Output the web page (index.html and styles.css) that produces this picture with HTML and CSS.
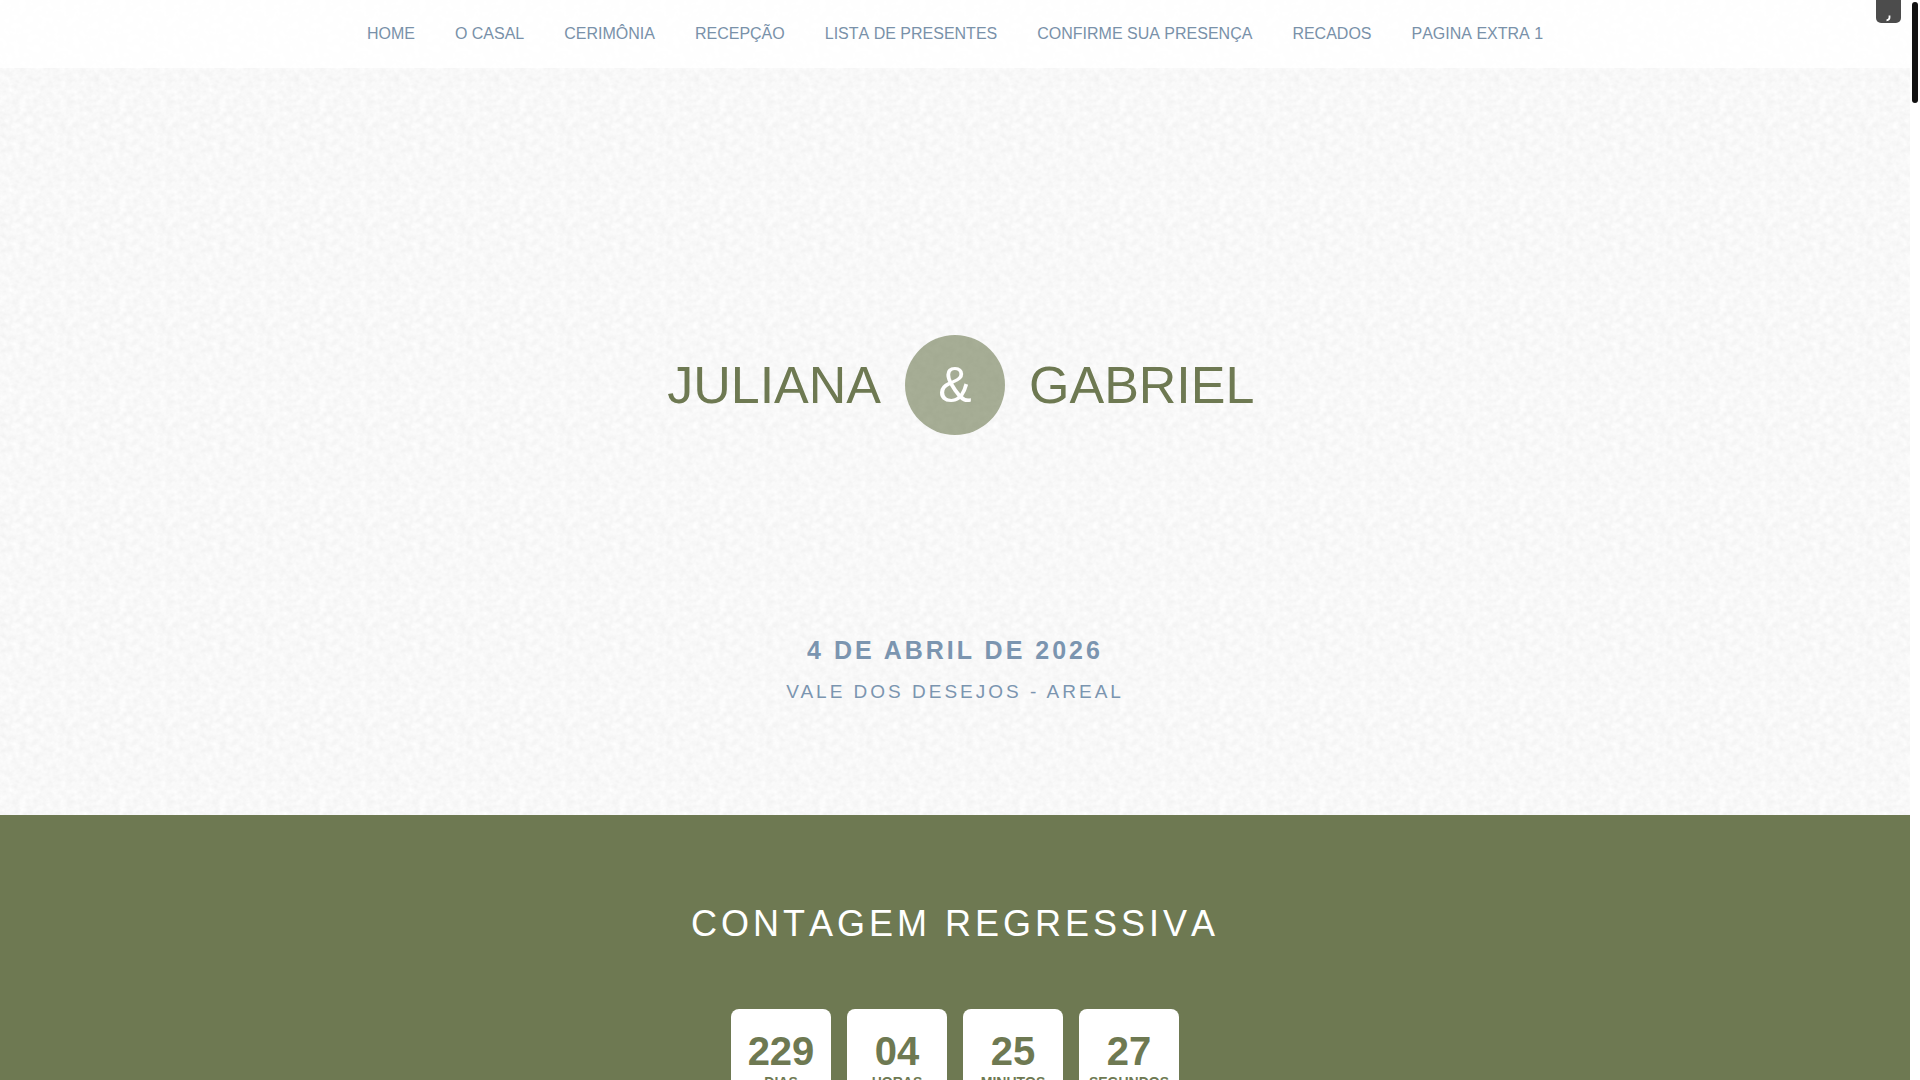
FILE: index.html
```html
<!DOCTYPE html>
<html lang="pt-BR">
<head>
    <meta charset="UTF-8">
    <meta name="viewport" content="width=device-width, initial-scale=1.0">
    <title>Juliana &amp; Gabriel</title>
    <link rel="stylesheet" href="styles.css">
</head>
<body>
    <div class="page">
        <header class="topo">
            <nav class="menu">
                <a href="#home">Home</a>
                <a href="#casal">O Casal</a>
                <a href="#cerimonia">Cerimônia</a>
                <a href="#recepcao">Recepção</a>
                <a href="#presentes">Lista de Presentes</a>
                <a href="#presenca">Confirme sua Presença</a>
                <a href="#recados">Recados</a>
                <a href="#extra">Pagina Extra 1</a>
            </nav>
        </header>

        <section class="capa" id="home">
            <h1 class="nomes">
                <span class="noiva">Juliana</span>
                <span class="e">&amp;</span>
                <span class="noivo">Gabriel</span>
            </h1>
            <p class="data">4 de Abril de 2026</p>
            <p class="local">Vale dos Desejos - Areal</p>
        </section>

        <section class="contagem">
            <h2>Contagem Regressiva</h2>
            <div class="relogio">
                <div class="caixa"><strong>229</strong><span>Dias</span></div>
                <div class="caixa"><strong>04</strong><span>Horas</span></div>
                <div class="caixa"><strong>25</strong><span>Minutos</span></div>
                <div class="caixa"><strong>27</strong><span>Segundos</span></div>
            </div>
        </section>
    </div>

    <button class="player" type="button" aria-label="Música">
        <svg width="26" height="24" viewBox="0 0 26 24"><path d="M13.5 15.5 V17.5 Q13.5 20 10.5 20.3" fill="none" stroke="#fff" stroke-width="1.8"/></svg>
    </button>
    <div class="rolagem"><div class="barra"></div></div>
</body>
</html>
```

FILE: styles.css
```css
* {
    box-sizing: border-box;
}

html {
    overflow: hidden;
}

body {
    margin: 0;
    font-family: "Liberation Sans", Arial, sans-serif;
    font-kerning: none;
    background-color: #fff;
    text-transform: uppercase;
}

.page {
    margin-right: 10px;
    background-color: #f8f8f8;
    /* textura de papel, bloco de 100px */
    background-image: url("data:image/svg+xml,%3Csvg xmlns='http://www.w3.org/2000/svg' width='100' height='100'%3E%3Cfilter id='p' x='0' y='0' width='100%25' height='100%25' color-interpolation-filters='sRGB'%3E%3CfeTurbulence type='fractalNoise' baseFrequency='.15 .17' numOctaves='3' seed='4' stitchTiles='stitch'/%3E%3CfeColorMatrix values='.065 0 0 0 .941 .065 0 0 0 .941 .065 0 0 0 .941 0 0 0 0 1'/%3E%3C/filter%3E%3Crect width='100' height='100' filter='url(%23p)'/%3E%3C/svg%3E");
}

/* menu */
.topo {
    padding: 24px 0;
    background-color: rgba(255, 255, 255, 0.85);
}

.menu {
    display: flex;
    justify-content: center;
    gap: 40px;
}

.menu a {
    font-size: 16px;
    line-height: 20px;
    color: #7991a9;
    text-decoration: none;
}

/* capa */
.capa {
    padding: 267px 0 112px;
    text-align: center;
}

.nomes {
    display: grid;
    grid-template-columns: 1fr 100px 1fr;
    align-items: center;
    gap: 24px;
    margin: 0 0 200px;
    font-size: 52px;
    font-weight: normal;
    color: #6e7952;
}

.noiva {
    text-align: right;
}

.noivo {
    text-align: left;
}

.e {
    height: 100px;
    line-height: 100px;
    border-radius: 50%;
    background-color: rgba(110, 121, 82, 0.6);
    font-size: 50px;
    color: #fff;
}

.data,
.local {
    margin: 0;
    color: #7b95b0;
    font-kerning: normal;
    letter-spacing: 3px;
}

.data {
    margin-bottom: 16px;
    font-size: 25px;
    line-height: 30px;
    font-weight: bold;
}

.local {
    font-size: 19px;
    line-height: 22px;
}

/* contagem regressiva */
.contagem {
    padding: 87px 0 80px;
    background-color: #6e7952;
    text-align: center;
}

.contagem h2 {
    margin: 0 0 63px;
    font-size: 36px;
    line-height: 44px;
    font-weight: normal;
    letter-spacing: 4px;
    color: #fff;
}

.relogio {
    display: flex;
    justify-content: center;
    gap: 16px;
}

.caixa {
    width: 100px;
    height: 100px;
    padding-top: 20px;
    border-radius: 8px;
    background-color: #fff;
    color: #6e7952;
}

.caixa strong,
.caixa span {
    display: block;
    font-weight: bold;
}

.caixa strong {
    font-size: 40px;
    line-height: 44px;
}

.caixa span {
    font-size: 14px;
    line-height: 18px;
}

/* botão do player preso no topo */
.player {
    position: fixed;
    top: 0;
    right: 19px;
    width: 25px;
    height: 23px;
    padding: 0;
    border: none;
    border-radius: 0 0 5px 5px;
    background-color: #4c4c4c;
    overflow: hidden;
    cursor: pointer;
}

.player svg {
    display: block;
}

/* barra de rolagem */
.rolagem {
    position: fixed;
    top: 0;
    right: 0;
    bottom: 0;
    width: 10px;
    padding: 2px;
    background-color: #fff;
}

.barra {
    width: 6px;
    height: 101px;
    border-radius: 3px;
    background-color: #111;
}
```
